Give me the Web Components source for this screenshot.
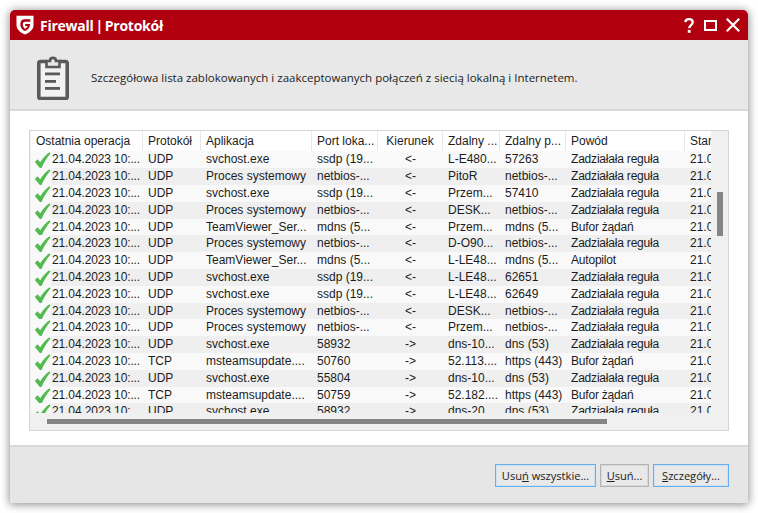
<!DOCTYPE html>
<html lang="pl"><head><meta charset="utf-8"><title>Firewall | Protokół</title>
<style>
html,body{margin:0;padding:0;background:#fff;width:758px;height:513px;overflow:hidden}
body{padding:10px;box-sizing:border-box;font-family:"Liberation Sans",sans-serif}
</style></head><body>
<fw-window>
  <fw-titlebar slot="title">Firewall | Protokół</fw-titlebar>
  <fw-intro slot="intro">Szczegółowa lista zablokowanych i zaakceptowanych połączeń z siecią lokalną i Internetem.</fw-intro>
  <fw-table slot="body"></fw-table>
  <fw-btn slot="foot" focused style="width:101px"><span>Usu<u>ń</u> wszystkie...</span></fw-btn>
  <fw-btn slot="foot" style="width:49px"><span><u>U</u>suń...</span></fw-btn>
  <fw-btn slot="foot" focused style="width:76px"><span><u>S</u>zczegóły...</span></fw-btn>
</fw-window>
<script>
class FwWindow extends HTMLElement{constructor(){super();this.attachShadow({mode:'open'}).innerHTML=`<style>
:host{display:flex;flex-direction:column;width:738px;height:493px;box-shadow:0 1px 8px 1px rgba(0,0,0,.42);border-radius:5px 5px 3px 3px;overflow:hidden;background:#fff}
.body{flex:1;background:#fff;padding:19px 19px 14px 19px;display:flex;min-height:0}
.foot{height:58px;flex:none;box-sizing:border-box;background:#e6e6e6;border-top:2px solid #d9d9d9;display:flex;justify-content:flex-end;align-items:flex-start;gap:4px;padding:17px 19px 0 0}
</style><slot name="title"></slot><slot name="intro"></slot><div class="body"><slot name="body"></slot></div><div class="foot"><slot name="foot"></slot></div>`}}
customElements.define('fw-window',FwWindow);

class FwTitlebar extends HTMLElement{constructor(){super();this.attachShadow({mode:'open'}).innerHTML=`<style>
:host{display:flex;align-items:center;height:30px;flex:none;background:#b0000f;color:#fff;padding:0 8px 0 6px;font:700 14px "Open Sans",sans-serif}
.t{margin-left:6px;flex:1;white-space:nowrap;word-spacing:-1.5px;letter-spacing:-.25px}
svg{display:block}
.ctl{display:flex;align-items:center}
</style>
<svg width="18" height="20" viewBox="0 0 18 20"><path d="M.5 .8H17.500V10C17.500 14.600 13.400 17.600 9 19.600 4.600 17.600 .5 14.600 .5 10Z" fill="#fff"/><path d="M14.300 4.300H8.800C5.800 4.300 4.300 6.300 4.300 9.200 4.300 12.400 6.300 14.800 9 16 11.800 14.800 14 12.600 14.200 9H9.200V10.900H11.600C11.200 12.200 10.200 13.100 9 13.700 7.600 12.900 6.800 11.200 6.800 9.300 6.800 7.600 7.600 6.700 9 6.700H14.300Z" fill="#b0000f"/></svg>
<span class="t"><slot></slot></span>
<span class="ctl">
<svg width="10" height="15" viewBox="0 0 10 15" style="margin-right:10px"><path d="M1.300 4.200C1.500 2.200 3 1.200 5 1.200c2.300 0 3.700 1.200 3.700 3 0 2.900-3.500 2.800-3.500 6" fill="none" stroke="#fff" stroke-width="2.300"/><rect x="3.800" y="12" width="2.800" height="2.800" fill="#fff"/></svg>
<svg width="13" height="11" viewBox="0 0 13 11" style="margin-right:9px"><rect x="1" y="1" width="11" height="9" fill="none" stroke="#fff" stroke-width="2"/></svg>
<svg width="14" height="14" viewBox="0 0 14 14"><path d="M.8 .8L13.200 13.200M13.200 .8L.8 13.200" stroke="#fff" stroke-width="2.200" fill="none"/></svg>
</span>`}}
customElements.define('fw-titlebar',FwTitlebar);

class FwIntro extends HTMLElement{constructor(){super();this.attachShadow({mode:'open'}).innerHTML=`<style>
:host{display:flex;align-items:center;height:71px;flex:none;background:#e8e8e8;border-bottom:2px solid #d9d9d9;box-sizing:border-box;padding:5px 0 0 27px;color:#1c1c1c;font:11.5px "Open Sans",sans-serif}
svg{display:block;margin:2px 22px 0 0;flex:none}
</style>
<svg width="32" height="44" viewBox="0 0 32 44"><path d="M10 5.500H3.500Q1.800 5.500 1.800 7.200V41Q1.800 42.500 3.500 42.500H28.500Q30.200 42.500 30.200 41V7.200Q30.200 5.500 28.500 5.500H22" fill="#f2f2f2" stroke="#5a5a5a" stroke-width="3.600"/><path d="M9.500 11V5H13C13 .8 19 .8 19 5H22.500V11Z" fill="#e8e8e8" stroke="#5a5a5a" stroke-width="2.600"/><rect x="8" y="16.500" width="15" height="2.800" fill="#5a5a5a"/><rect x="8" y="24" width="11" height="2.800" fill="#5a5a5a"/><rect x="8" y="31" width="15" height="2.800" fill="#5a5a5a"/></svg>
<span><slot></slot></span>`}}
customElements.define('fw-intro',FwIntro);

class FwBtn extends HTMLElement{constructor(){super();this.attachShadow({mode:'open'}).innerHTML=`<style>
:host{display:flex;align-items:center;justify-content:center;height:23px;box-sizing:border-box;background:#e9e9e9;border:1px solid #b4b4b4;box-shadow:inset 0 0 0 1px #d8d8d8;color:#222;font:11.1px "Open Sans",sans-serif;white-space:nowrap}
:host([focused]){border-color:#66aef0;box-shadow:inset 0 0 0 1px #cfe2f3}
</style><slot></slot>`}}
customElements.define('fw-btn',FwBtn);

const COLS=[112,58,111,66,65,57,66,119,60];
const TPL=COLS.map(c=>c+'px').join(' ');
class FwRow extends HTMLElement{
  connectedCallback(){
    const d=JSON.parse(this.dataset.cells);
    const root=this.attachShadow({mode:'open'});
    root.innerHTML=`<style>
:host{display:grid;grid-template-columns:${TPL};height:16.8px;font:12px/16.8px "Liberation Sans",sans-serif;color:#1c1c1c;white-space:nowrap}
.c{padding-left:5px;overflow:hidden;box-sizing:border-box}
.c.d{padding-left:21px;position:relative;overflow:visible;letter-spacing:-.12px}
.c.d::before{content:"";position:absolute;left:0;top:0;width:20px;height:100%;background:#f9f9f9}
.c.r{letter-spacing:-.2px}
.m{text-align:center;padding-left:0}
svg{position:absolute;left:3px;top:1px}
</style>`+d.map((t,i)=>i==0?`<div class="c d"><svg width="17" height="16" viewBox="0 0 15 15"><path d="M.3 9.300L2.800 6.800L5.400 9.600C7.800 5.700 10.600 2.800 14 .3L15 1.500C11.500 5.500 9 9.600 6.600 15H5Z" fill="#52bb50"/></svg>${t}</div>`:`<div class="c${i==4?' m':''}${i==7?' r':''}">${t}</div>`).join('');
  }
}
customElements.define('fw-row',FwRow);

class FwHead extends HTMLElement{constructor(){super();const h=['Ostatnia operacja','Protokół','Aplikacja','Port loka...','Kierunek','Zdalny ...','Zdalny p...','Powód','Start'];
this.attachShadow({mode:'open'}).innerHTML=`<style>
:host{display:grid;grid-template-columns:${TPL};height:20.4px;background:#fff;font:12px/20px "Liberation Sans",sans-serif;color:#1c1c1c;white-space:nowrap}
div{padding-left:5px;overflow:hidden;box-sizing:border-box;border-right:1px solid #e8e8e8}
.m{text-align:center;padding-left:0}
div:last-child{border:0}
</style>`+h.map((t,i)=>`<div class="${i==4?'m':''}">${t}</div>`).join('')}}
customElements.define('fw-head',FwHead);

const D='21.04.2023 10:...',Z='Zadziałała reguła',S='svchost.exe',P='Proces systemowy',T='TeamViewer_Ser...',M='msteamsupdate....',N='netbios-...',SS='ssdp (19...',MD='mdns (5...',B='Bufor żądań';
const ROWS=[
['UDP',S,SS,'&lt;-','L-E480...','57263',Z],
['UDP',P,N,'&lt;-','PitoR',N,Z],
['UDP',S,SS,'&lt;-','Przem...','57410',Z],
['UDP',P,N,'&lt;-','DESK...',N,Z],
['UDP',T,MD,'&lt;-','Przem...',MD,B],
['UDP',P,N,'&lt;-','D-O90...',N,Z],
['UDP',T,MD,'&lt;-','L-LE48...',MD,'Autopilot'],
['UDP',S,SS,'&lt;-','L-LE48...','62651',Z],
['UDP',S,SS,'&lt;-','L-LE48...','62649',Z],
['UDP',P,N,'&lt;-','DESK...',N,Z],
['UDP',P,N,'&lt;-','Przem...',N,Z],
['UDP',S,'58932','-&gt;','dns-10...','dns (53)',Z],
['TCP',M,'50760','-&gt;','52.113....','https (443)',B],
['UDP',S,'55804','-&gt;','dns-10...','dns (53)',Z],
['TCP',M,'50759','-&gt;','52.182....','https (443)',B],
['UDP',S,'58932','-&gt;','dns-20...','dns (53)',Z]];
class FwTable extends HTMLElement{constructor(){super();
const rows=ROWS.map((r,i)=>{const c=[D,...r,'21.0'];return `<fw-row class="${i%2?'o':'e'}" data-cells='${JSON.stringify(c).replace(/'/g,"&#39;")}'></fw-row>`}).join('');
this.attachShadow({mode:'open'}).innerHTML=`<style>
:host{display:grid;grid-template-columns:680px 17px;grid-template-rows:282px 17px;flex:none;border:1px solid #d6d6d6;background:#f0f0f0;box-sizing:border-box;width:700px;height:301px;padding-left:1px}
.list{overflow:hidden;background:#fafafa;min-width:0;min-height:0}
fw-row.o{background:#efefef}
fw-row.e{background:#f9f9f9}
.v{background:#f0f0f0;padding:61px 5px 0 6px}
.v i{display:block;height:44px;background:#858585}
.h{grid-column:1;background:#f0f0f0;padding:6px 0 0 16px}
.h i{display:block;width:560px;height:5px;background:#858585}
.k{background:#f0f0f0}
</style><div class="list"><fw-head></fw-head>${rows}</div><div class="v"><i></i></div><div class="h"><i></i></div><div class="k"></div>`}}
customElements.define('fw-table',FwTable);
</script>
</body></html>
